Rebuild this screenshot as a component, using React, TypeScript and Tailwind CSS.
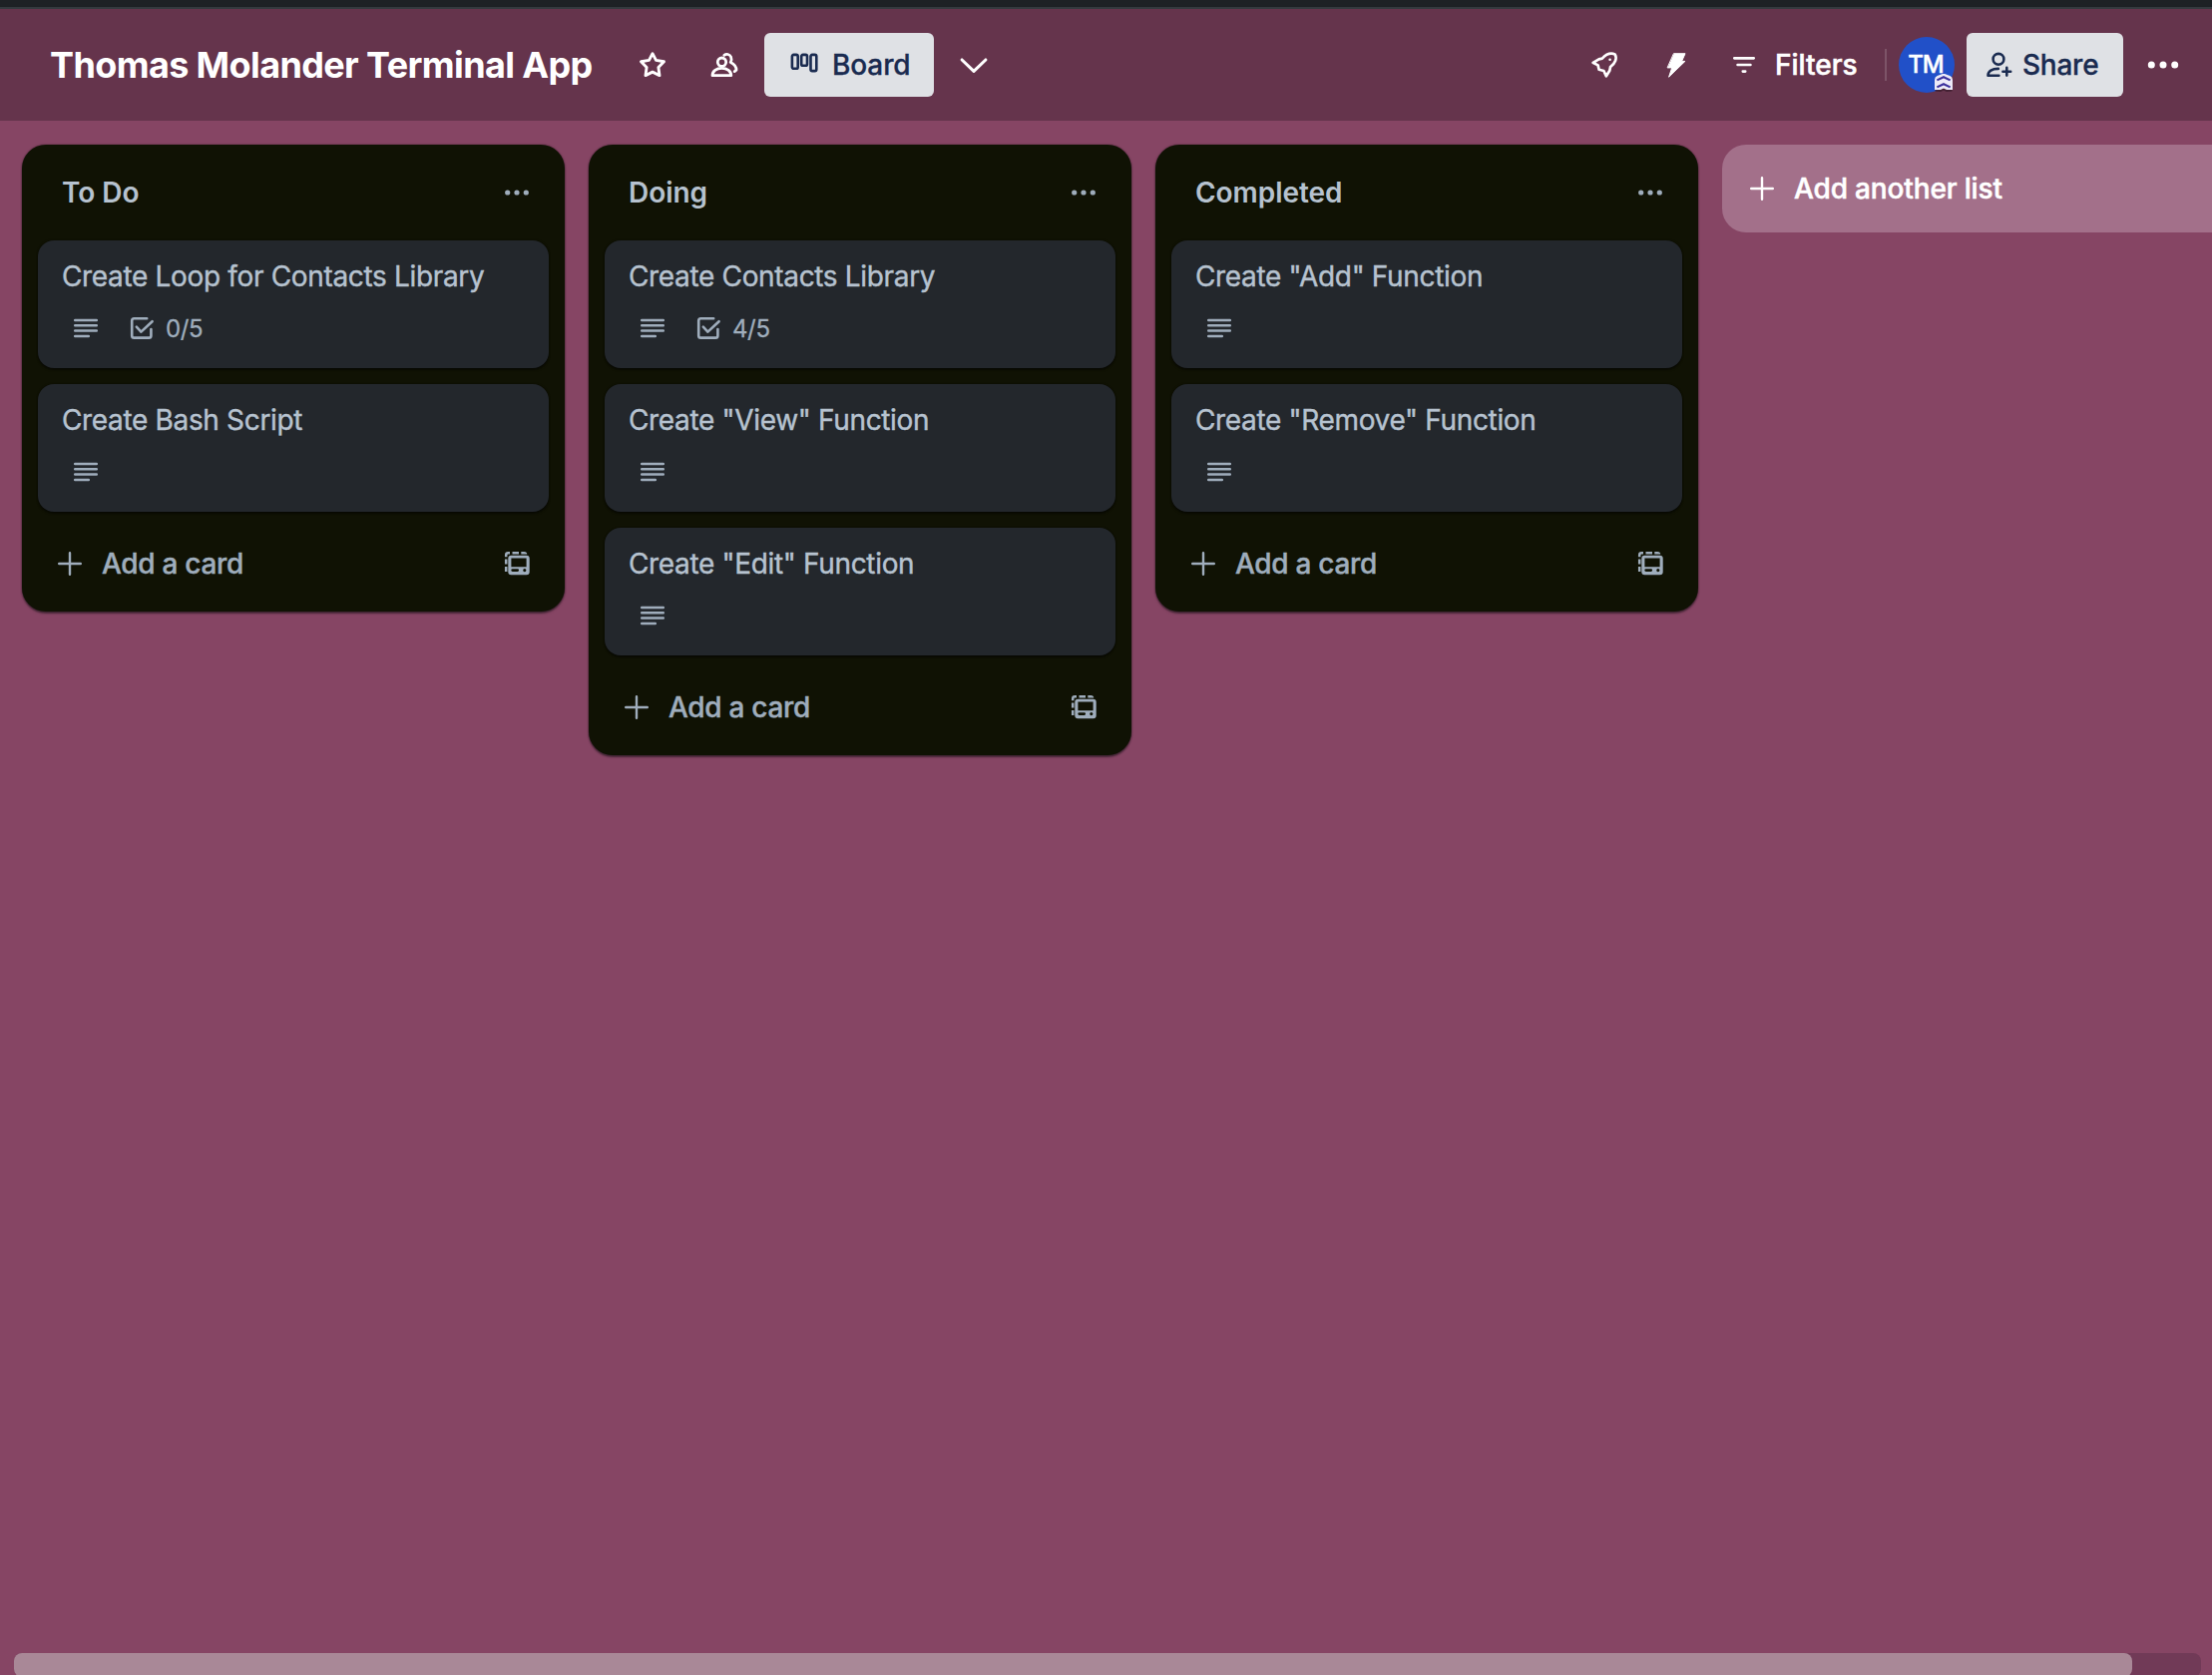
import type { ReactNode } from "react";

type CardData = { title: string; checklist?: string };
type ListData = { name: string; cards: CardData[] };

const lists: ListData[] = [
  {
    name: "To Do",
    cards: [
      { title: "Create Loop for Contacts Library", checklist: "0/5" },
      { title: "Create Bash Script" },
    ],
  },
  {
    name: "Doing",
    cards: [
      { title: "Create Contacts Library", checklist: "4/5" },
      { title: 'Create "View" Function' },
      { title: 'Create "Edit" Function' },
    ],
  },
  {
    name: "Completed",
    cards: [
      { title: 'Create "Add" Function' },
      { title: 'Create "Remove" Function' },
    ],
  },
];

function Icon({ children, width = 2.7 }: { children: ReactNode; width?: number }) {
  return (
    <svg
      className="size-8 shrink-0"
      viewBox="0 0 32 32"
      fill="none"
      stroke="currentColor"
      strokeWidth={width}
      strokeLinecap="round"
      strokeLinejoin="round"
    >
      {children}
    </svg>
  );
}

const StarIcon = () => (
  <Icon width={2.9}>
    <path d="M16 4.7 19.5 11.4 27.5 12.8 21.9 18.5 23 26.6 16 23.1 9 26.6 10.1 18.5 4.5 12.8 12.5 11.4Z" />
  </Icon>
);

const PeopleIcon = () => (
  <Icon width={2.8}>
    <circle cx="13.5" cy="13.2" r="4.2" />
    <path d="M4 26.7C4 22.2 8 19.3 13.4 19.3S22.8 22.2 22.8 26.7Z" />
    <path d="M15.8 6.3C18 4.6 21.4 5.3 22.6 8 23.4 10 23.2 11.8 22.2 13.4 26 15.2 28 18.2 28 21.2L26.2 22.6" />
  </Icon>
);

const BoardIcon = () => (
  <svg className="h-5 w-7 shrink-0" viewBox="0 0 28 20" fill="none" stroke="currentColor" strokeWidth="2.6">
    <rect x="1.9" y="1.9" width="5.8" height="13.9" rx="1.6" />
    <rect x="11.2" y="1.9" width="5.8" height="10.9" rx="1.6" />
    <rect x="20.5" y="1.9" width="5.8" height="16.2" rx="1.6" />
  </svg>
);

const ChevronIcon = () => (
  <Icon width={3.1}>
    <path d="M4.1 11 16 22.4 27.9 11" />
  </Icon>
);

const RocketIcon = () => (
  <Icon width={2.7}>
    <path d="M26.6 5.4C22.6 3.8 17.5 5.6 13.8 9.6L10.5 10.4 4.6 13.8 9.6 16.4 10.6 20.8 15.4 22 17.9 27.3 21.3 21.8 22 18.2C26.8 14.8 29 9.5 26.6 5.4Z" />
    <circle cx="21.6" cy="10.7" r="1.3" fill="currentColor" stroke="none" />
  </Icon>
);

const BoltIcon = () => (
  <Icon width={1}>
    <path fill="currentColor" d="M13.8 4.7H25L21.6 12.4H24.9L8.6 28.2 11.7 18.9H7.5Z" />
  </Icon>
);

const FilterIcon = () => (
  <Icon width={2.7}>
    <path d="M6.3 9.3H25.7M9.6 16H22.4M14.8 22.6H17.2" />
  </Icon>
);

const AddPersonIcon = () => (
  <Icon width={2.6}>
    <circle cx="15" cy="10.3" r="5.4" />
    <path d="M14.8 19.9C8.6 19.9 4.5 22.4 4.5 26.7H15.4" />
    <path d="M23.3 18.8V26.6M19.4 22.7H27.2" />
  </Icon>
);

const PlusIcon = () => (
  <Icon width={2.4}>
    <path d="M16 5.2V26.8M5.2 16H26.8" />
  </Icon>
);

const DescriptionIcon = () => (
  <Icon width={2.5}>
    <path d="M5.2 8H26.8M5.2 13.3H26.8M5.2 18.6H26.8M5.2 23.9H18.8" />
  </Icon>
);

const ChecklistIcon = () => (
  <Icon width={2.6}>
    <path d="M21.2 6.3H8.4Q6.2 6.3 6.2 8.5V23.4Q6.2 25.6 8.4 25.6H23.2Q25.4 25.6 25.4 23.4V17" />
    <path d="M10.8 14.6 15.4 19.6 26.6 9.2" />
  </Icon>
);

const TemplateIcon = () => (
  <Icon width={2.5}>
    <path
      strokeLinecap="butt"
      d="M5.2 9.2V7.2Q5.2 5.3 7.2 5.3H9M11.5 5.3H18M20.3 5.3H23.2Q25 5.3 25 6.6M5.2 11.4V16.6M5.2 19V24"
    />
    <path
      fill="currentColor"
      stroke="none"
      fillRule="evenodd"
      d="M10.3 7.7H25.7A3 3 0 0 1 28.7 10.7V24.3A3 3 0 0 1 25.7 27.3H10.3A3 3 0 0 1 7.3 24.3V10.7A3 3 0 0 1 10.3 7.7ZM10.4 10.5V19.2H25.6V10.5ZM11.7 21.2A1.4 1.4 0 0 0 11.7 24H16.7A1.4 1.4 0 0 0 16.7 21.2ZM23.8 21A1.6 1.6 0 1 0 23.8 24.2 1.6 1.6 0 1 0 23.8 21Z"
    />
  </Icon>
);

const ListMenuIcon = () => (
  <svg className="size-8 shrink-0" viewBox="0 0 32 32" fill="currentColor">
    <circle cx="6.7" cy="16" r="2.6" />
    <circle cx="16" cy="16" r="2.6" />
    <circle cx="25.3" cy="16" r="2.6" />
  </svg>
);

const BoardMenuIcon = () => (
  <svg className="size-8 shrink-0 overflow-visible" viewBox="0 0 32 32" fill="currentColor">
    <circle cx="4.3" cy="16" r="3.5" />
    <circle cx="16" cy="16" r="3.5" />
    <circle cx="27.7" cy="16" r="3.5" />
  </svg>
);

function Avatar() {
  return (
    <div className="relative ml-3 flex size-14 items-center justify-center rounded-full bg-[#2150c8] pr-0.5 text-2xl font-medium tracking-[-1px] text-white [-webkit-text-stroke:0.4px]">
      <span>TM</span>
      <svg className="absolute right-[2px] bottom-[1px] h-[18px] w-[18px]" viewBox="0 0 18 18" fill="none">
        <path fill="#3a1c2c" opacity="0.8" d="M0.5 15H17.5V17.6L12 18 9 16.6 6 18 0.5 17.6Z" />
        <path fill="#eceaf8" d="M0 16V6Q0 3 2.6 2L7.2 0.2Q9 -0.4 10.8 0.2L15.4 2Q18 3 18 6V16H12L9 14.6 6 16Z" />
        <path stroke="#3a2f9c" strokeWidth="2.1" d="M2.4 6.4 9 3.2 15.6 6.4M2.4 13.4 9 10.2 15.6 13.4" />
      </svg>
    </div>
  );
}

function Header() {
  return (
    <header className="flex h-28 shrink-0 items-center bg-[#65344c] pr-[33px] pl-[50px] text-white">
      <h1 className="w-[588px] text-4xl font-bold tracking-[-0.62px] whitespace-nowrap">
        Thomas Molander Terminal App
      </h1>
      <StarIcon />
      <div className="ml-10 flex">
        <PeopleIcon />
      </div>
      <div className="ml-6 flex h-16 w-[170px] items-center rounded-md bg-[#dfe1e5] pl-[26px] text-[28px] font-medium text-[#1a2b50]">
        <div className="-mt-1">
          <BoardIcon />
        </div>
        <span className="ml-3.5 tracking-[-0.1px] [-webkit-text-stroke:0.3px]">Board</span>
      </div>
      <div className="ml-6 flex">
        <ChevronIcon />
      </div>

      <div className="ml-auto flex items-center">
        <RocketIcon />
        <div className="ml-10 flex">
          <BoltIcon />
        </div>
        <div className="ml-9 flex items-center gap-[15px] text-[28px] font-medium">
          <FilterIcon />
          <span className="w-[83px] [-webkit-text-stroke:0.5px]">Filters</span>
        </div>
        <div className="ml-[27px] h-8 w-0.5 bg-white/16" />
        <Avatar />
        <div className="ml-3 flex h-16 w-[157px] items-center gap-[7px] rounded-md bg-[#dfe1e5] pl-[17px] text-[28px] font-medium tracking-[-0.25px] text-[#1a2b50]">
          <AddPersonIcon />
          <span className="[-webkit-text-stroke:0.3px]">Share</span>
        </div>
        <div className="ml-6 flex">
          <BoardMenuIcon />
        </div>
      </div>
    </header>
  );
}

function Card({ card }: { card: CardData }) {
  return (
    <article className="h-32 rounded-2xl bg-[#23272c] px-6 pt-4 shadow-[0_2px_2px_rgba(3,4,4,0.5),0_0_2px_rgba(3,4,4,0.5)]">
      <h3 className="text-[28px] leading-10 tracking-[-0.34px] whitespace-nowrap text-[#b6c2cf] [-webkit-text-stroke:0.4px]">
        {card.title}
      </h3>
      <div className="mt-4 flex items-center pl-2 text-[#9fadbc]">
        <DescriptionIcon />
        {card.checklist && (
          <div className="ml-6 flex items-center gap-2">
            <ChecklistIcon />
            <span className="-mb-px pt-px text-2xl leading-8 tracking-[-0.38px] [-webkit-text-stroke:0.3px]">
              {card.checklist}
            </span>
          </div>
        )}
      </div>
    </article>
  );
}

function List({ list }: { list: ListData }) {
  return (
    <section className="w-[544px] shrink-0 rounded-3xl bg-[#101204] shadow-[0_2px_2px_rgba(9,10,11,0.5),0_0_2px_rgba(9,10,11,0.5)]">
      <div className="flex h-24 items-center justify-between pr-8 pl-10">
        <h2 className="text-[28px] font-semibold tracking-[-0.05px] text-[#b6c2cf]">{list.name}</h2>
        <div className="text-[#9fadbc]">
          <ListMenuIcon />
        </div>
      </div>
      <div className="flex flex-col gap-4 px-4">
        {list.cards.map((card) => (
          <Card key={card.title} card={card} />
        ))}
      </div>
      <div className="mt-1 flex h-24 items-center gap-4 px-8 text-[#9fadbc]">
        <PlusIcon />
        <span className="flex-1 text-[28px] font-medium tracking-[-0.3px] [-webkit-text-stroke:0.4px]">Add a card</span>
        <TemplateIcon />
      </div>
    </section>
  );
}

export default function App() {
  return (
    <div className="flex h-[1679px] w-full flex-col overflow-hidden bg-[#864564] font-['Inter',sans-serif]">
      <div className="h-[9px] shrink-0 border-b-2 border-[#343a3f] bg-[#1d2125]" />
      <Header />
      <main className="flex min-h-0 flex-1 items-start gap-6 overflow-hidden pt-6 pl-[22px]">
        {lists.map((list) => (
          <List key={list.name} list={list} />
        ))}
        <div className="flex h-[88px] w-[544px] shrink-0 items-center gap-4 rounded-3xl bg-[#a3708a] pl-6 text-[28px] font-medium tracking-[-0.15px] text-white">
          <PlusIcon />
          <span className="[-webkit-text-stroke:0.5px]">Add another list</span>
        </div>
      </main>
      <div className="h-[22px] shrink-0 overflow-hidden pr-[11px] pl-3.5">
        <div className="h-6 rounded-lg bg-[#713a57]">
          <div className="h-6 w-[2123px] rounded-lg bg-[#a98897]" />
        </div>
      </div>
    </div>
  );
}
